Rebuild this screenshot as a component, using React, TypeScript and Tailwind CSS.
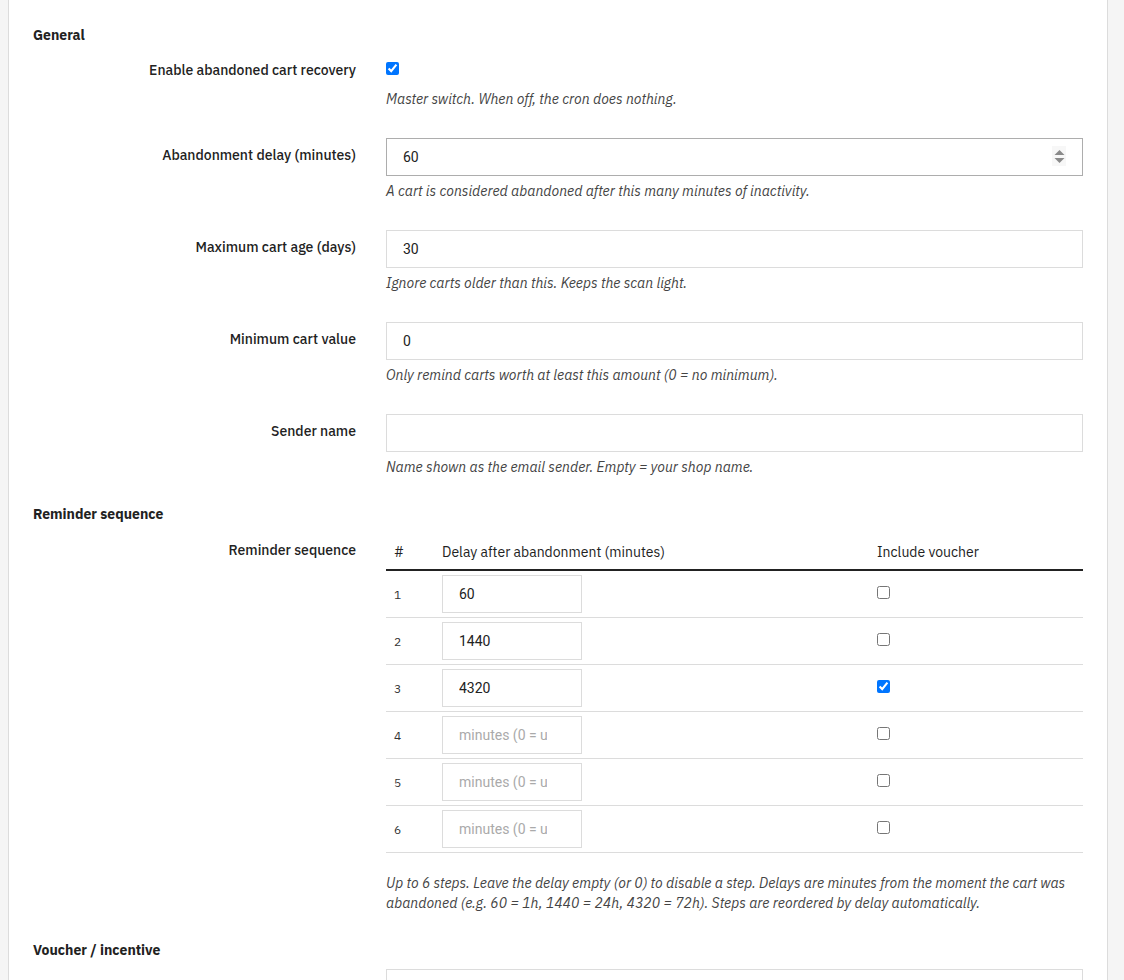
import React from "react";

const font = { fontFamily: '"IBM Plex Sans", Roboto, "Noto Sans", sans-serif' };

function Row({ label, children, help, labelPt = "pt-[7px]" }: { label: string; children: React.ReactNode; help?: string; labelPt?: string }) {
  return (
    <div className="grid grid-cols-[323px_697px] gap-x-[30px] mb-[29px]">
      <div className={`text-right text-[14px] leading-5 font-medium text-[#222] ${labelPt}`}>{label}</div>
      <div>
        {children}
        {help && <div className="mt-[5px] text-[14px] leading-5 italic text-[#444]">{help}</div>}
      </div>
    </div>
  );
}

function TextInput({ value, placeholder, dark, pr = "pr-2" }: { value?: string; placeholder?: string; dark?: boolean; pr?: string }) {
  return (
    <input
      type="text"
      defaultValue={value}
      placeholder={placeholder}
      readOnly
      className={`block w-full h-[38px] border ${dark ? "border-[#adadad]" : "border-[#dcdcdc]"} bg-white pl-4 ${pr} text-[14px] text-[#222] placeholder:text-[#aaa] outline-none`}
      style={{ fontFamily: 'Roboto, "Noto Sans", sans-serif' }}
    />
  );
}

function Heading({ children, className = "" }: { children: React.ReactNode; className?: string }) {
  return <div className={`text-[14px] leading-5 font-bold text-[#222] ${className}`}>{children}</div>;
}

const steps = [
  { n: 1, v: "60", c: false },
  { n: 2, v: "1440", c: false },
  { n: 3, v: "4320", c: true },
  { n: 4, v: "", c: false },
  { n: 5, v: "", c: false },
  { n: 6, v: "", c: false },
];

export default function App() {
  return (
    <div className="min-h-[980px] h-[980px] overflow-hidden bg-[#f5f5f5] pl-2" style={font}>
      <div className="w-[1100px] h-full bg-white border-x border-[#dcdcdc] px-6 pt-[25px]">
        <Heading className="mb-[9px]">General</Heading>

        <div className="grid grid-cols-[323px_697px] gap-x-[30px] mb-[29px]">
          <div className="text-right text-[14px] leading-5 font-medium text-[#222] pt-[6px]">Enable abandoned cart recovery</div>
          <div className="pt-[8px]">
            <input type="checkbox" defaultChecked className="block m-0 w-[13px] h-[13px]" />
            <div className="mt-[14px] text-[14px] leading-5 italic text-[#444]">Master switch. When off, the cron does nothing.</div>
          </div>
        </div>

        <Row label="Abandonment delay (minutes)" help="A cart is considered abandoned after this many minutes of inactivity.">
          <div className="relative">
            <TextInput value="60" dark />
            <div className="absolute right-[17px] top-[8px] w-[14px] h-[20px] bg-[#f7f7f7] flex items-center justify-center">
              <svg width="11" height="17" viewBox="0 0 11 17">
                <path d="M5.5 2 L10.5 7 H0.5 Z" fill="#8a8a8a" />
                <path d="M0.5 10 H10.5 L5.5 15 Z" fill="#8a8a8a" />
              </svg>
            </div>
          </div>
        </Row>

        <Row label="Maximum cart age (days)" help="Ignore carts older than this. Keeps the scan light.">
          <TextInput value="30" />
        </Row>

        <Row label="Minimum cart value" help="Only remind carts worth at least this amount (0 = no minimum).">
          <TextInput value="0" />
        </Row>

        <Row label="Sender name" help="Name shown as the email sender. Empty = your shop name.">
          <TextInput />
        </Row>

        <Heading className="-mt-[2px] mb-[9px]">Reminder sequence</Heading>

        <div className="grid grid-cols-[323px_697px] gap-x-[30px] mb-[27px]">
          <div className="text-right text-[14px] leading-5 font-medium text-[#222] pt-[7px]">Reminder sequence</div>
          <div>
            <table className="w-full border-collapse text-[14px] text-[#222]">
              <thead>
                <tr className="border-b-2 border-[#222]">
                  <th className="w-[48px] text-left font-normal pl-2 pt-[9px] pb-[7px] leading-5">#</th>
                  <th className="w-[435px] text-left font-normal pl-2 pt-[9px] pb-[7px] leading-5">Delay after abandonment (minutes)</th>
                  <th className="text-left font-normal pl-2 pt-[9px] pb-[7px] leading-5">Include voucher</th>
                </tr>
              </thead>
              <tbody>
                {steps.map((s) => (
                  <tr key={s.n} className="border-b border-[#dcdcdc]">
                    <td className="pl-2 py-1 text-[12px] text-[#333] align-middle pt-[6px]">{s.n}</td>
                    <td className="pl-2 py-1 align-middle">
                      <div className="w-[140px]">
                        <TextInput value={s.v || undefined} placeholder="minutes (0 = unlimited)" pr="pr-[34px]" />
                      </div>
                    </td>
                    <td className="pl-2 py-1 align-middle">
                      <input type="checkbox" defaultChecked={s.c} className="block m-0 w-[13px] h-[13px] -mt-[3px]" />
                    </td>
                  </tr>
                ))}
              </tbody>
            </table>
            <div className="mt-5 text-[14px] leading-5 italic text-[#444]">
              Up to 6 steps. Leave the delay empty (or 0) to disable a step. Delays are minutes from the moment the cart was abandoned (e.g. 60 = 1h, 1440 = 24h, 4320 = 72h). Steps are reordered by delay automatically.
            </div>
          </div>
        </div>

        <Heading className="mb-[9px]">Voucher / incentive</Heading>

        <div className="grid grid-cols-[323px_697px] gap-x-[30px]">
          <div></div>
          <TextInput />
        </div>
      </div>
    </div>
  );
}
